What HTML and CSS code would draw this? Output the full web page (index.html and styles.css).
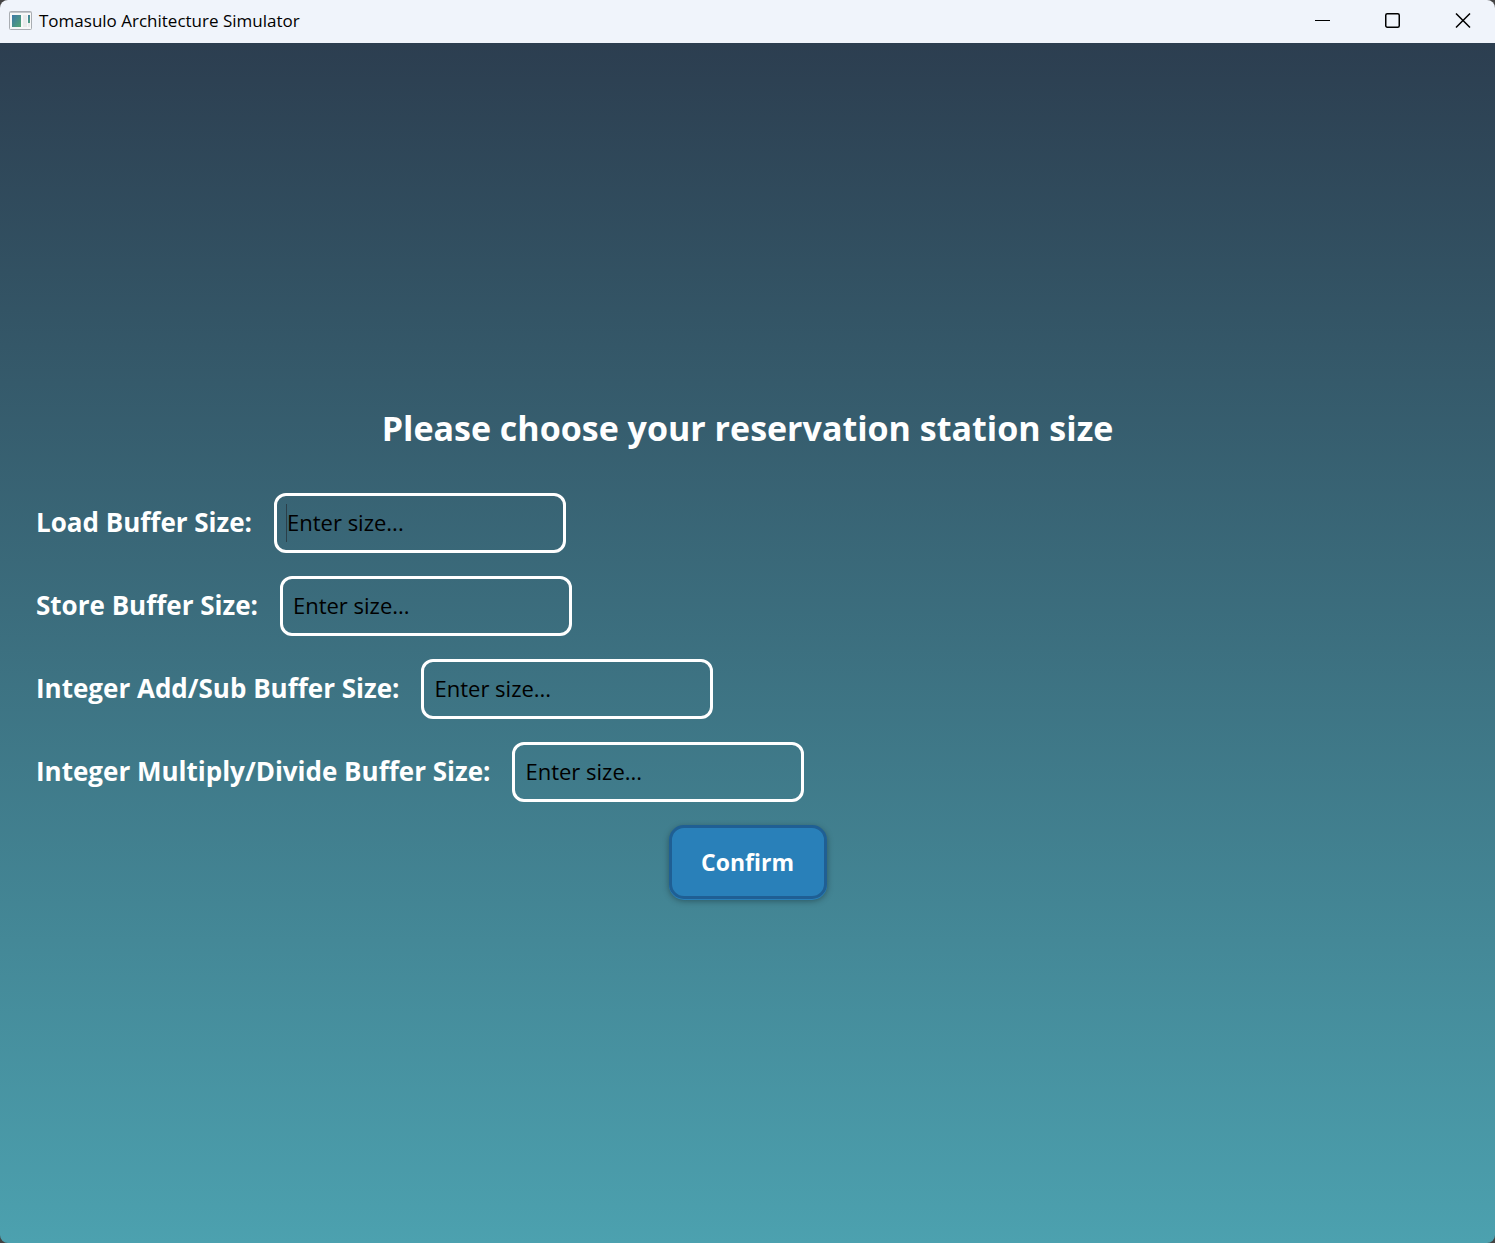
FILE: index.html
```html
<!DOCTYPE html>
<html lang="en">
<head>
<meta charset="utf-8">
<title>Tomasulo Architecture Simulator</title>
<link rel="stylesheet" href="styles.css">
</head>
<body>
<div class="window">
  <header class="titlebar">
    <svg class="app-icon" viewBox="0 0 24 20" aria-hidden="true">
      <defs>
        <linearGradient id="pane" x1="0" y1="0" x2="1" y2="1"><stop offset="0" stop-color="#3d78a8"/><stop offset="1" stop-color="#55a772"/></linearGradient>
      </defs>
      <rect x="0.5" y="0.5" width="22" height="18" rx="1" fill="#f8f8f8" stroke="#a9adb2"/>
      <path d="M1 1.5H22" stroke="#c3c7cb"/>
      <rect x="3" y="4" width="9" height="12" fill="url(#pane)"/>
      <rect x="14" y="4" width="4" height="12" fill="#e9ebeb"/>
      <rect x="19" y="4" width="2" height="8" fill="url(#pane)"/>
      <rect x="19" y="12" width="2" height="4" fill="#e9ebeb"/>
    </svg>
    <span class="app-name">Tomasulo Architecture Simulator</span>
    <div class="window-controls">
      <button type="button" aria-label="Minimize"><svg viewBox="0 0 16 16"><path d="M1 7.5H16" stroke-width="1"/></svg></button>
      <button type="button" aria-label="Maximize"><svg viewBox="0 0 16 16"><rect x="1.75" y="0.75" width="13.5" height="13.5" rx="1.5"/></svg></button>
      <button type="button" aria-label="Close"><svg viewBox="0 0 16 16"><path d="M1 0.5L15 14.5M15 0.5L1 14.5"/></svg></button>
    </div>
  </header>
  <main class="content">
    <h1>Please choose your reservation station size</h1>
    <form class="sizes">
      <div class="field"><label for="load">Load Buffer Size:</label><input id="load" type="text" placeholder="Enter size..." autofocus></div>
      <div class="field"><label for="store">Store Buffer Size:</label><input id="store" type="text" placeholder="Enter size..."></div>
      <div class="field"><label for="add">Integer Add/Sub Buffer Size:</label><input id="add" type="text" placeholder="Enter size..."></div>
      <div class="field"><label for="mul">Integer Multiply/Divide Buffer Size:</label><input id="mul" type="text" placeholder="Enter size..."></div>
      <button class="confirm" type="submit">Confirm</button>
    </form>
  </main>
</div>
</body>
</html>
```
FILE: styles.css
```css
* { box-sizing: border-box; }
body { margin: 0; background: #444; font-family: "Open Sans", "Noto Sans", sans-serif; }
.window { min-height: 100vh; display: flex; flex-direction: column; border-radius: 8px; overflow: hidden; }
.titlebar { height: 43px; display: flex; align-items: center; padding: 0 0 2px 9px; background: #f0f4fb; color: #000; }
.app-icon { width: 24px; height: 20px; margin-right: 6px; }
.app-name { font-size: 17px; }
.window-controls { margin-left: auto; display: flex; height: 100%; }
.window-controls button { width: 70px; border: 0; padding: 0; background: none; display: grid; place-items: center; }
.window-controls button:last-child { width: 68px; padding-left: 4px; }
.window-controls svg { width: 16px; height: 16px; fill: none; stroke: #000; stroke-width: 1.5; }
.content { flex: 1; display: flex; flex-direction: column; justify-content: center; gap: 41px; padding: 17px 36px 0; background: linear-gradient(#2c3e50, #4ca1af); color: #fff; }
h1 { margin: 0; text-align: center; font-size: 34px; line-height: 48px; font-weight: 700; }
.sizes { display: flex; flex-direction: column; gap: 23px; }
.field { display: flex; align-items: center; gap: 22px; }
.field label { padding-bottom: 2px; font-size: 26px; line-height: 36px; font-weight: 700; }
.field input { width: 292px; height: 60px; padding: 0 10px 2px; border: 3px solid #fff; border-radius: 12px; background: transparent; color: #000; font: 22px "Open Sans", "Noto Sans", sans-serif; outline: 0; }
.field input::placeholder { color: #000; opacity: 1; }
/* Tall insertion bar in the focused, still empty field */
.field input:focus:placeholder-shown { caret-color: transparent; background: linear-gradient(#2b3f49, #2b3f49) 9px center / 1px 38px no-repeat; }
.confirm { align-self: center; width: 158px; height: 74px; border: 3px solid #1f5f94; border-radius: 15px; background: #2980b9; color: #fff; font: 700 23px "Open Sans", "Noto Sans", sans-serif; box-shadow: 0 1px #2980b9, 0 2px 6px rgba(0, 0, 0, .35); }
```
